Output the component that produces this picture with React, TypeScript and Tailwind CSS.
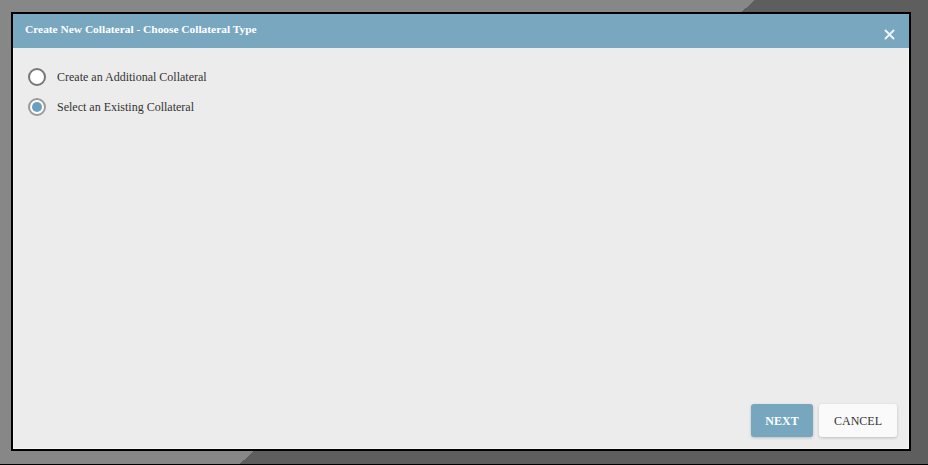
import React from 'react';

function Radio({ checked }: { checked?: boolean }) {
  return (
    <span
      className={`flex h-[18px] w-[18px] shrink-0 items-center justify-center rounded-full border-2 bg-white ${
        checked ? 'border-[#9a9a9a]' : 'border-[#777777]'
      }`}
    >
      {checked && <span className="h-[10px] w-[10px] rounded-full bg-[#6c9fbd]" />}
    </span>
  );
}

export default function App() {
  return (
    <div
      className="flex h-[465px] w-[928px] border-b border-black bg-[linear-gradient(138deg,#878787_52.3%,#5e5e5e_52.3%)] pl-[11px] pt-[12px] pb-[13px] font-['Liberation_Serif',serif]"
    >
      {/* Dialog */}
      <div className="flex h-[439px] w-[900px] flex-col border-2 border-black bg-[#ececec]">
        {/* Header */}
        <div className="flex h-[34px] shrink-0 items-center justify-between bg-[#79a7bf] pl-[12px] pr-[14px]">
          <h1 className="-mt-[2px] text-[11.4px] font-bold text-white">
            Create New Collateral - Choose Collateral Type
          </h1>
          <svg width="11" height="11" viewBox="0 0 11 11" className="mt-[7px]">
            <path d="M1.5 1.5 L9.5 9.5 M9.5 1.5 L1.5 9.5" stroke="#eef4f8" strokeWidth="2" strokeLinecap="round" />
          </svg>
        </div>

        {/* Body */}
        <div className="flex flex-1 flex-col border border-[#f4f4f4] border-t-0">
          <div className="flex flex-col gap-[12px] pl-[14px] pt-[20px]">
            <label className="flex items-center gap-[11px] text-[12px] text-[#333333]">
              <Radio />
              <span>Create an Additional Collateral</span>
            </label>
            <label className="flex items-center gap-[11px] text-[12px] text-[#333333]">
              <Radio checked />
              <span>Select an Existing Collateral</span>
            </label>
          </div>

          <div className="mt-auto flex justify-end gap-[6px] pb-[11px] pr-[11px]">
            <button className="h-[33px] w-[62px] rounded-[3px] bg-[#77a6bf] text-[12px] font-bold text-white shadow-[0_1px_3px_rgba(0,0,0,0.2)]">
              NEXT
            </button>
            <button className="h-[33px] w-[78px] rounded-[3px] bg-[#fafafa] text-[12px] text-[#333333] shadow-[0_1px_3px_rgba(0,0,0,0.2)]">
              CANCEL
            </button>
          </div>
        </div>
      </div>
    </div>
  );
}
